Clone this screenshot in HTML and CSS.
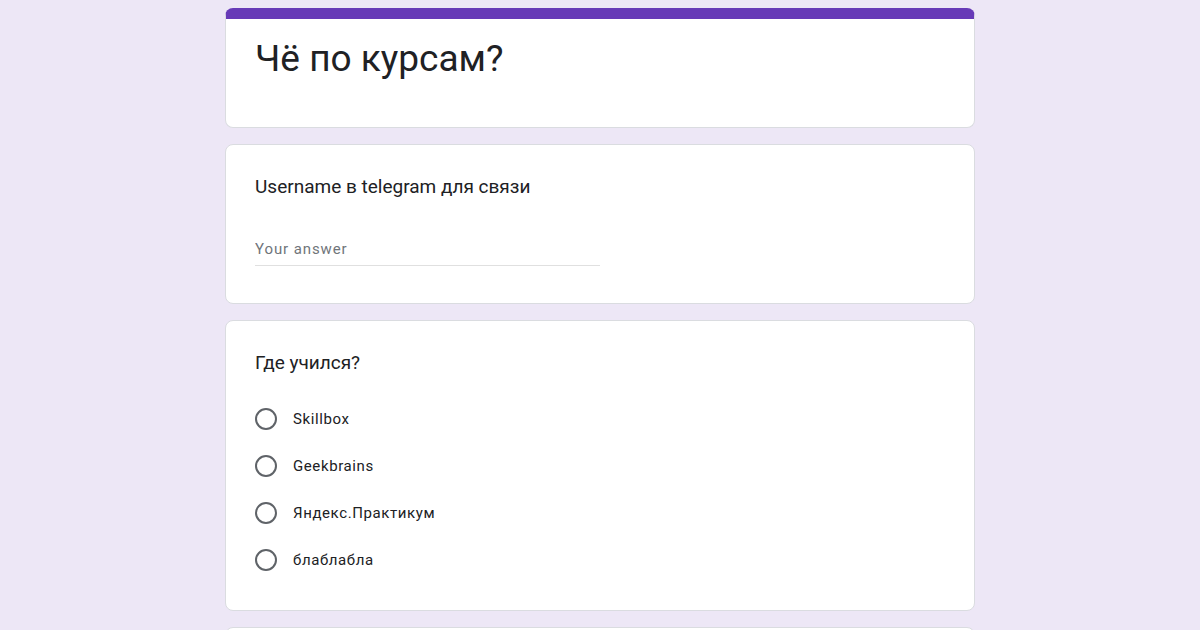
FILE: index.html
```html
<!doctype html>
<html lang="ru">
    <head>
        <meta charset="utf-8"/>
        <title>Чё по курсам?</title>
        <link rel="stylesheet" href="styles.css">
    </head>
    <body>
        <main class="form">
            <div class="card title-card">
                <h1 class="form-title">Чё по курсам?</h1>
            </div>
            <div class="card question">
                <div class="question-title">Username в telegram для связи</div>
                <input class="answer" type="text" placeholder="Your answer"/>
            </div>
            <div class="card question">
                <div class="question-title">Где учился?</div>
                <div class="options">
                    <label class="option"><span class="radio"></span>Skillbox</label>
                    <label class="option"><span class="radio"></span>Geekbrains</label>
                    <label class="option"><span class="radio"></span>Яндекс.Практикум</label>
                    <label class="option"><span class="radio"></span>блаблабла</label>
                </div>
            </div>
            <div class="card question"></div>
        </main>
    </body>
</html>
```

FILE: styles.css
```css
body {
    background-color: #ede7f6;
    margin: 0;
    padding-top: 8px;
    color: #202124;
    font-family: Roboto, "Noto Sans", sans-serif;
}

.form {
    width: 750px;
    margin: 0 auto;
    display: flex;
    flex-direction: column;
    gap: 16px;
}

.card {
    background: #fff;
    border: 1px solid #dadce0;
    border-radius: 8px;
    padding: 0 29px;
}

.title-card {
    border-top: 11px solid #673ab7;
    height: 120px;
    box-sizing: border-box;
}

.form-title {
    margin: 0;
    padding-top: 18px;
    font-size: 37px;
    font-weight: 400;
    line-height: 44px;
}

.question {
    padding-top: 28px;
    padding-bottom: 20px;
}

.question-title {
    font-size: 19px;
    line-height: 28px;
}

.answer {
    display: block;
    margin-top: 39px;
    width: 345px;
    border: 0;
    border-bottom: 1px solid #e0e0e0;
    padding: 0 0 7px;
    font-family: Roboto, sans-serif;
    font-size: 15px;
    outline: none;
    margin-bottom: 17px;
}

.answer::placeholder {
    color: #70757a;
    letter-spacing: 0.9px;
}

.options {
    margin-top: 18px;
    padding-bottom: 7px;
}

.option {
    display: flex;
    align-items: center;
    height: 47px;
    font-size: 15px;
    letter-spacing: 0.6px;
}

.radio {
    width: 22px;
    height: 22px;
    border: 2px solid #5f6368;
    border-radius: 50%;
    box-sizing: border-box;
    margin-right: 16px;
}
```
